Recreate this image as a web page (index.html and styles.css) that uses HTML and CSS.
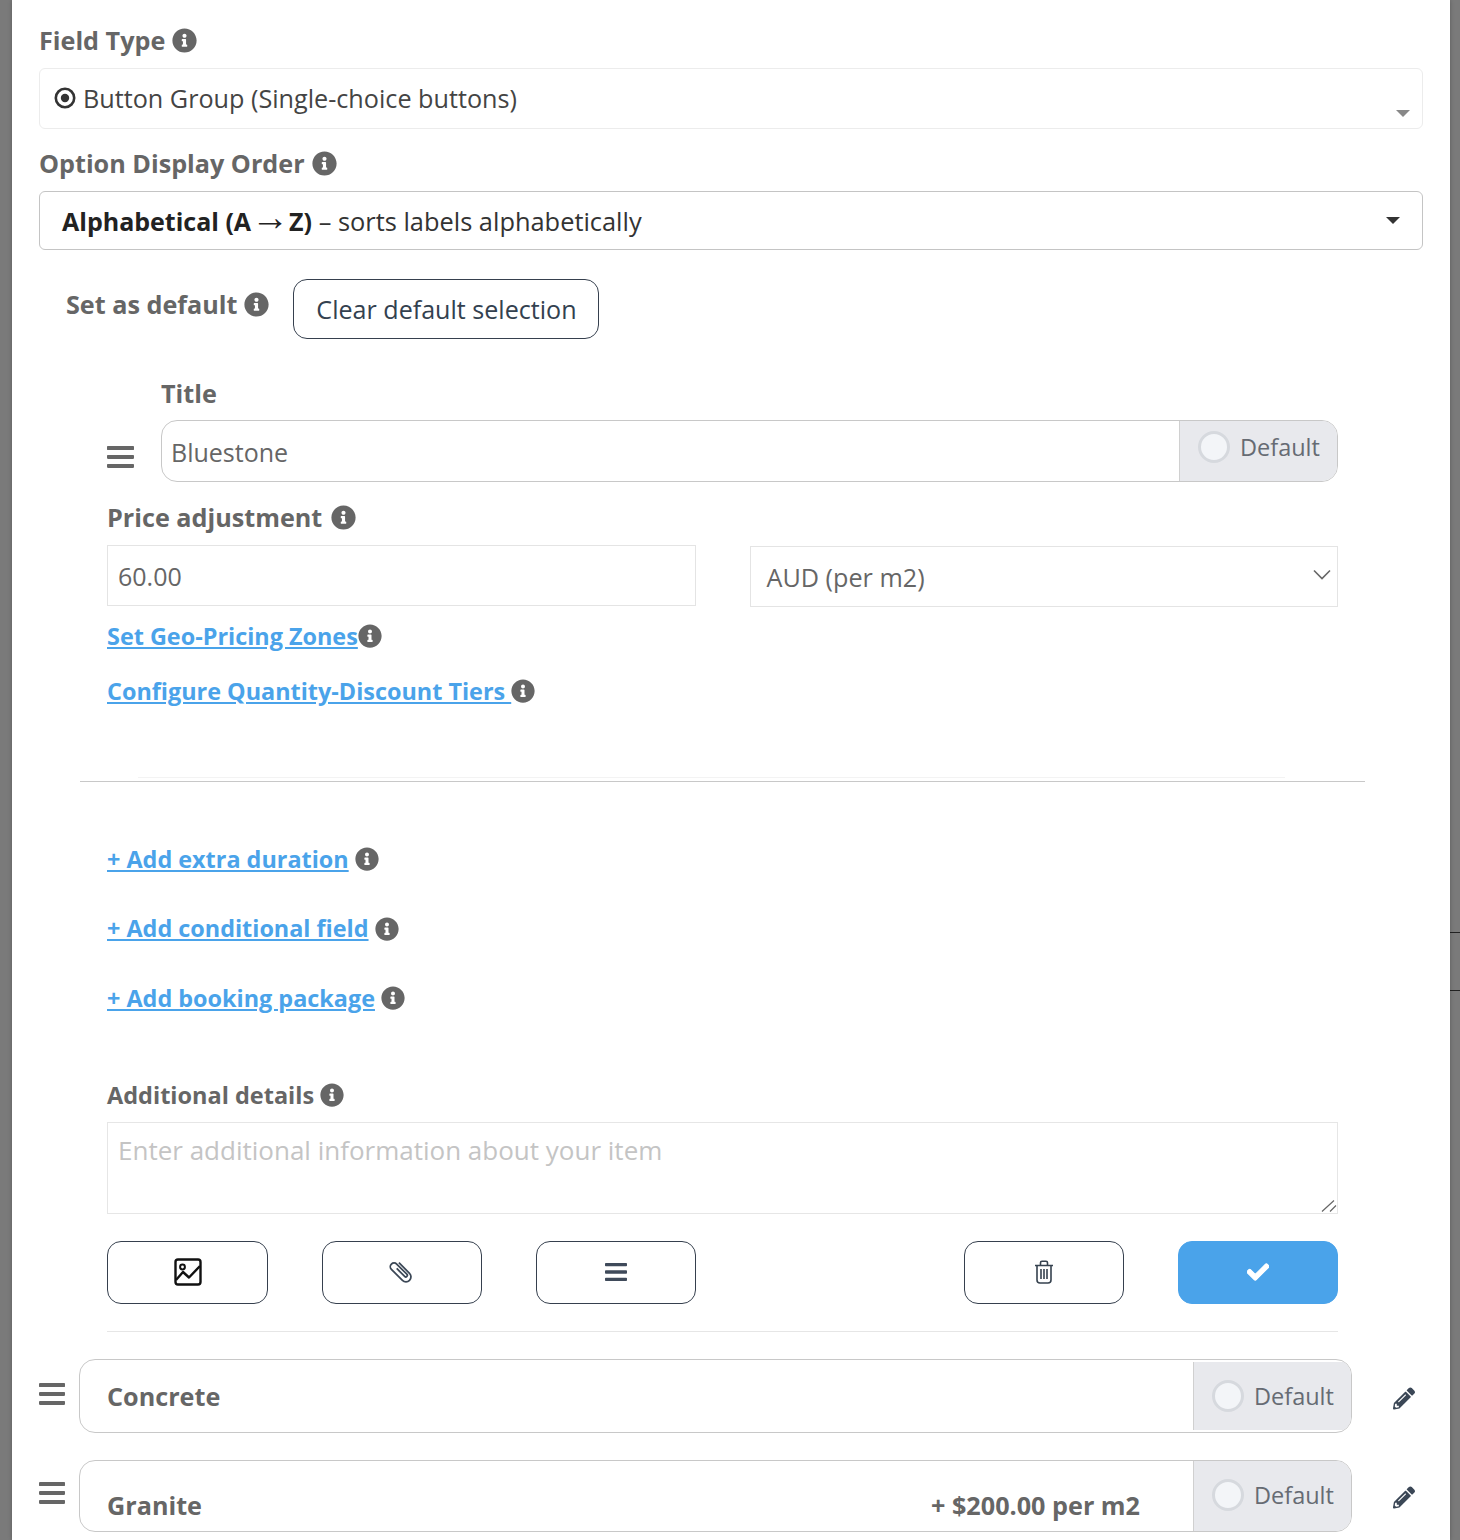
FILE: index.html
```html
<!DOCTYPE html>
<html>
<head>
    <title>Field settings</title>
    <meta name="viewport" content="width=device-width, initial-scale=1.0">
    <link rel="stylesheet" href="styles.css">
</head>
<body>
    <svg class="sprite" xmlns="http://www.w3.org/2000/svg">
        <symbol id="i-info" viewBox="0 0 512 512"><path d="M256 8C119.043 8 8 119.083 8 256c0 136.997 111.043 248 248 248s248-111.003 248-248C504 119.083 392.957 8 256 8zm0 110c23.196 0 42 18.804 42 42s-18.804 42-42 42-42-18.804-42-42 18.804-42 42-42zm56 254c0 6.627-5.373 12-12 12h-88c-6.627 0-12-5.373-12-12v-24c0-6.627 5.373-12 12-12h12v-64h-12c-6.627 0-12-5.373-12-12v-24c0-6.627 5.373-12 12-12h64c6.627 0 12 5.373 12 12v100h12c6.627 0 12 5.373 12 12v24z"/></symbol>
        <symbol id="i-bars" viewBox="0 60 448 392" preserveAspectRatio="none"><path d="M16 132h416c8.837 0 16-7.163 16-16V76c0-8.837-7.163-16-16-16H16C7.163 60 0 67.163 0 76v40c0 8.837 7.163 16 16 16zm0 160h416c8.837 0 16-7.163 16-16v-40c0-8.837-7.163-16-16-16H16c-8.837 0-16 7.163-16 16v40c0 8.837 7.163 16 16 16zm0 160h416c8.837 0 16-7.163 16-16v-40c0-8.837-7.163-16-16-16H16c-8.837 0-16 7.163-16 16v40c0 8.837 7.163 16 16 16z"/></symbol>
        <symbol id="i-pencil" viewBox="0 0 512 512"><path d="M497.9 142.1l-46.1 46.1c-4.7 4.7-12.3 4.7-17 0l-111-111c-4.7-4.7-4.7-12.3 0-17l46.1-46.1c18.7-18.7 49.1-18.7 67.9 0l60.1 60.1c18.8 18.7 18.8 49.1 0 67.9zM284.2 99.8L21.6 362.4.4 483.9c-2.9 16.4 11.4 30.6 27.8 27.8l121.5-21.3 262.6-262.6c4.7-4.7 4.7-12.3 0-17l-111-111c-4.8-4.7-12.4-4.7-17.1 0zM124.1 339.9c-5.5-5.5-5.5-14.3 0-19.8l154-154c5.5-5.5 14.3-5.5 19.8 0s5.5 14.3 0 19.8l-154 154c-5.5 5.5-14.3 5.5-19.8 0zM88 424h48v36.3l-64.5 11.3-31.1-31.1L51.7 376H88v48z"/></symbol>
    </svg>

    <div class="modal">
        <div class="label">Field Type <svg class="info"><use href="#i-info"/></svg></div>
        <div class="select select-light">
            <svg class="dot-circle" viewBox="0 0 22 22"><circle cx="11" cy="11" r="9.2" fill="none" stroke="#333" stroke-width="2.6"/><circle cx="11" cy="11" r="4.2" fill="#333"/></svg>
            <span>Button Group (Single-choice buttons)</span>
            <i class="caret caret-light"></i>
        </div>

        <div class="label label-second">Option Display Order <svg class="info"><use href="#i-info"/></svg></div>
        <div class="select select-dark">
            <span><strong>Alphabetical (A<span class="arrow"> → </span>Z)</strong> – sorts labels alphabetically</span>
            <i class="caret"></i>
        </div>

        <div class="default-row">
            <div class="label">Set as default <svg class="info"><use href="#i-info"/></svg></div>
            <button class="btn-clear">Clear default selection</button>
        </div>

        <div class="editor">
            <div class="title-row">
                <div class="label title-label">Title</div>
                <svg class="handle title-handle"><use href="#i-bars"/></svg>
                <div class="input-group">
                    <input type="text" class="title-input" value="Bluestone">
                    <div class="addon"><span class="radio"></span>Default</div>
                </div>
            </div>

            <div class="label price-label">Price adjustment <svg class="info"><use href="#i-info"/></svg></div>
            <div class="price-row">
                <input type="text" class="field" value="60.00">
                <div class="unit-select">
                    <span>AUD (per m2)</span>
                    <svg class="chevron" viewBox="0 0 18 12"><path d="M1 1.5l8 8 8-8" fill="none" stroke="#666" stroke-width="1.6"/></svg>
                </div>
            </div>

            <div class="link-row geo-row"><a href="#">Set Geo-Pricing Zones</a><svg class="info"><use href="#i-info"/></svg></div>
            <div class="link-row tiers-row"><a href="#">Configure Quantity-Discount Tiers </a><svg class="info"><use href="#i-info"/></svg></div>
        </div>

        <div class="details">
            <div class="add-links">
                <div class="link-row"><a href="#">+ Add extra duration</a><svg class="info"><use href="#i-info"/></svg></div>
                <div class="link-row"><a href="#">+ Add conditional field</a><svg class="info"><use href="#i-info"/></svg></div>
                <div class="link-row"><a href="#">+ Add booking package</a><svg class="info"><use href="#i-info"/></svg></div>
            </div>

            <div class="label details-label">Additional details <svg class="info"><use href="#i-info"/></svg></div>
            <div class="details-wrap">
                <textarea class="details-text" placeholder="Enter additional information about your item"></textarea>
                <svg class="grip" viewBox="0 0 16 12" fill="none" stroke="#666" stroke-width="1.2"><path d="M1 11.500L13 .5M9 11.500l6-6"/></svg>
            </div>

            <div class="actions">
                <button class="btn">
                    <svg class="ic-image" viewBox="0 0 28 28" fill="none" stroke="#111" stroke-width="2.4"><rect x="1.5" y="1.5" width="25" height="25" rx="2.5"/><circle cx="8.5" cy="9" r="2.4" stroke-width="2"/><path d="M2 22l7-8 6 5.5L26 8" stroke-linejoin="round"/></svg>
                </button>
                <button class="btn">
                    <svg class="ic-clip" viewBox="0 0 24 24" fill="none" stroke="#3b4756" stroke-width="1.4"><path transform="rotate(-45 12 12)" d="M15.5 5v12a4 4 0 0 1-8 0V4.500a3 3 0 0 1 6 0V16a1 1 0 0 1-2.500 0V7"/></svg>
                </button>
                <button class="btn"><svg class="ic-bars"><use href="#i-bars"/></svg></button>
                <span></span>
                <button class="btn">
                    <svg class="ic-trash" viewBox="0 0 20 24" fill="none" stroke="#36424f" stroke-width="1.6"><path d="M1 5.500h18M6.500 5.500V2.800q0-1.500 1.500-1.500h4q1.500 0 1.500 1.500v2.700M3 5.500V20q0 3 3 3h8q3 0 3-3V5.500M7 9v10M10 9v10M13 9v10"/></svg>
                </button>
                <button class="btn btn-save">
                    <svg class="ic-check" viewBox="0 0 512 512"><path stroke="#fff" stroke-width="24" d="M173.898 439.404l-166.4-166.4c-9.997-9.997-9.997-26.206 0-36.204l36.203-36.204c9.997-9.998 26.207-9.998 36.204 0L192 312.69 432.095 72.596c9.997-9.997 26.207-9.997 36.204 0l36.203 36.204c9.997 9.997 9.997 26.206 0 36.204l-294.4 294.401c-9.998 9.997-26.207 9.997-36.204-.001z"/></svg>
                </button>
            </div>
        </div>

        <div class="option-row">
            <svg class="handle"><use href="#i-bars"/></svg>
            <div class="option-box">
                <div class="option-name">Concrete</div>
                <div class="addon addon-inset"><span class="radio"></span>Default</div>
            </div>
            <svg class="edit"><use href="#i-pencil"/></svg>
        </div>

        <div class="option-row option-row-last">
            <svg class="handle"><use href="#i-bars"/></svg>
            <div class="option-box">
                <div class="option-name option-name-low">Granite <span class="option-price">+ $200.00 per m2</span></div>
                <div class="addon"><span class="radio"></span>Default</div>
            </div>
            <svg class="edit"><use href="#i-pencil"/></svg>
        </div>
    </div>
</body>
</html>
```

FILE: styles.css
```css
html, body {
    margin: 0;
    height: 100%;
}
body {
    font-family: 'Open Sans', 'DejaVu Sans', sans-serif;
    background-color: #7a7a7a;
    /* two dark lines of the page behind show in the right gutter */
    background-image: linear-gradient(#222, #222), linear-gradient(#222, #222);
    background-size: 10px 1px;
    background-repeat: no-repeat;
    background-position: right 0 top 932px, right 0 top 990px;
    color: #555;
    overflow: hidden;
}
.sprite {
    display: none;
}
.modal {
    background-color: #fff;
    margin: 0 10px 0 12px;
    padding: 24px 27px 0;
    height: 100%;
    box-sizing: border-box;
    box-shadow: 0 0 4px rgba(0, 0, 0, 0.25);
}

/* labels */
.label {
    display: flex;
    align-items: center;
    gap: 7px;
    font-size: 25.2px;
    font-weight: 700;
    line-height: 34px;
    height: 32px;
    padding-bottom: 2px;
    color: #666;
    margin-bottom: 10px;
}
.label-second {
    margin-top: 18px;
}
.info {
    width: 25px;
    height: 25px;
    fill: #666;
    flex: none;
}

/* top selects */
.select {
    display: flex;
    align-items: center;
    position: relative;
    box-sizing: border-box;
    border-radius: 6px;
}
.select-light {
    height: 61px;
    border: 1px solid #ececec;
    padding: 0 0 2px 14px;
    font-size: 25.2px;
    color: #444;
}
.select-dark {
    height: 59px;
    border: 1px solid #c4c4c4;
    padding-left: 22px;
    font-size: 25.4px;
    color: #333;
}
.select strong {
    color: #222;
    font-size: 25px;
}
.arrow {
    font-family: 'Liberation Sans', sans-serif;
    font-size: 38px;
    font-weight: 400;
    line-height: 0;
    word-spacing: -10.56px;
    vertical-align: 1px;
}
.dot-circle {
    width: 22px;
    height: 22px;
    margin-right: 7px;
}
.caret {
    position: absolute;
    right: 22px;
    top: 25px;
    border-top: 7px solid #333;
    border-left: 7px solid transparent;
    border-right: 7px solid transparent;
}
.caret-light {
    right: 12px;
    top: 41px;
    border-top-color: #888;
}

/* set as default */
.default-row {
    display: flex;
    align-items: flex-start;
    gap: 24px;
    margin-top: 29px;
    padding-left: 27px;
}
.default-row .label {
    margin: 9px 0 0;
}
.btn-clear {
    height: 60px;
    width: 306px;
    padding: 0;
    background: #fff;
    border: 1px solid #36404e;
    border-radius: 14px;
    font-family: inherit;
    font-size: 25.1px;
    color: #33414f;
}

/* editor */
.editor {
    position: relative;
    margin: 0 58px 0 41px;
    padding: 38px 27px 72px;
    border-bottom: 1px solid #c8c8c8;
}
.editor::after {
    content: "";
    position: absolute;
    left: 58px;
    right: 80px;
    bottom: 3px;
    height: 1px;
    background-color: #f3f3f3;
}
.title-row {
    display: grid;
    grid-template-columns: 54px 1fr;
}
.title-label {
    grid-column: 2;
    margin-bottom: 9px;
}
.handle {
    width: 27px;
    height: 22px;
    fill: #666;
    flex: none;
}
.title-handle {
    margin-top: 26px;
}
.input-group {
    display: flex;
    height: 62px;
    box-sizing: border-box;
    border: 1px solid #c8c8c8;
    border-radius: 16px;
    overflow: hidden;
}
.title-input {
    flex: 1;
    min-width: 0;
    border: none;
    outline: none;
    padding: 2px 9px 0;
    font-family: inherit;
    font-size: 25px;
    color: #666;
    background: transparent;
}
.addon {
    display: flex;
    align-items: center;
    gap: 10px;
    width: 158px;
    box-sizing: border-box;
    padding: 0 0 8px 18px;
    background-color: #e8e9ed;
    border-left: 1px solid #d0d0d0;
    font-size: 23.5px;
    color: #666b73;
    flex: none;
}
.radio {
    width: 32px;
    height: 32px;
    box-sizing: border-box;
    border: 3px solid #d6d9de;
    border-radius: 50%;
    background-color: #f3f5f8;
    flex: none;
}
.price-label {
    margin-top: 19px;
}
.price-label .info {
    margin-left: 2px;
}
.price-row {
    display: grid;
    grid-template-columns: 1fr 1fr;
    gap: 54px;
}
.field {
    height: 61px;
    width: 100%;
    box-sizing: border-box;
    border: 1px solid #e4e4e4;
    padding: 0 10px;
    outline: none;
    font-family: inherit;
    font-size: 25px;
    color: #666;
}
.unit-select {
    display: flex;
    align-items: center;
    justify-content: space-between;
    height: 61px;
    margin-top: 1px;
    box-sizing: border-box;
    border: 1px solid #e4e4e4;
    padding: 0 6px 0 16px;
    font-size: 25.2px;
    color: #666;
}
.chevron {
    width: 18px;
    height: 12px;
    margin-top: -4px;
}

/* links */
.link-row {
    display: flex;
    align-items: center;
    height: 34px;
    font-size: 23.4px;
    font-weight: 700;
    white-space: pre;
}
.link-row a {
    color: #4aa3ea;
    margin-bottom: 3px;
}
.link-row .info {
    width: 24px;
    height: 24px;
    margin-bottom: 2px;
}
.geo-row {
    margin-top: 13px;
}
.tiers-row {
    margin-top: 21px;
}
.details {
    margin: 60px 85px 0 68px;
    padding-bottom: 27px;
    border-bottom: 1px solid #e6e6e6;
}
.add-links {
    display: flex;
    flex-direction: column;
    gap: 35.5px;
}
.add-links .link-row a {
    margin-bottom: 1px;
}
.add-links .link-row .info {
    margin: 0 0 0 6px;
}
.details-label {
    margin-top: 64px;
    margin-bottom: 9px;
    font-size: 23.5px;
}
.details-label .info {
    width: 24px;
    height: 24px;
    margin-left: -1px;
}
.details-wrap {
    position: relative;
}
.details-text {
    display: block;
    width: 100%;
    height: 92px;
    box-sizing: border-box;
    border: 1px solid #e6e6e6;
    padding: 9px 10px;
    outline: none;
    resize: none;
    font-family: inherit;
    font-size: 26px;
    line-height: 36px;
    color: #666;
}
.details-text::placeholder {
    color: #c4c4c4;
}
.grip {
    position: absolute;
    right: 1px;
    bottom: 2px;
    width: 16px;
    height: 12px;
}

/* action buttons */
.actions {
    display: grid;
    grid-template-columns: 161px 160px 160px 1fr 160px 160px;
    gap: 54px;
    margin-top: 27px;
}
.btn {
    display: flex;
    align-items: center;
    justify-content: center;
    height: 63px;
    padding: 0 0 1px;
    background: #fff;
    border: 1px solid #36404e;
    border-radius: 14px;
}
.btn-save {
    background-color: #4aa3ea;
    border-color: #4aa3ea;
}
.ic-image {
    width: 28px;
    height: 28px;
}
.ic-clip {
    width: 30px;
    height: 30px;
}
.ic-bars {
    width: 22px;
    height: 18px;
    fill: #3f4a5a;
}
.ic-trash {
    width: 20px;
    height: 24px;
}
.ic-check {
    width: 22px;
    height: 22px;
    fill: #fff;
}

/* saved options */
.option-row {
    display: flex;
    align-items: flex-start;
    margin-top: 27px;
}
.option-row .handle {
    width: 26px;
    margin: 24px 14px 0 0;
}
.option-box {
    display: flex;
    width: 1273px;
    height: 74px;
    box-sizing: border-box;
    border: 1px solid #c8c8c8;
    border-radius: 16px;
    overflow: hidden;
    flex: none;
}
.option-name {
    flex: 1;
    display: flex;
    align-items: center;
    justify-content: space-between;
    padding: 0 53px 0 27px;
    font-size: 25.2px;
    font-weight: 700;
    color: #666;
}
.option-name-low {
    padding-top: 18px;
}
.option-box .addon {
    padding-bottom: 0;
}
.option-box .addon-inset {
    margin: 2px 0;
}
.edit {
    width: 22px;
    height: 23px;
    margin: 28px 0 0 41px;
    fill: #3b4756;
    flex: none;
}
.option-row-last .handle {
    margin-top: 22px;
}
.option-row-last .option-box {
    height: 72px;
}
.option-row-last .addon {
    padding-bottom: 2px;
}
.option-row-last .edit {
    margin-top: 26px;
}
```
